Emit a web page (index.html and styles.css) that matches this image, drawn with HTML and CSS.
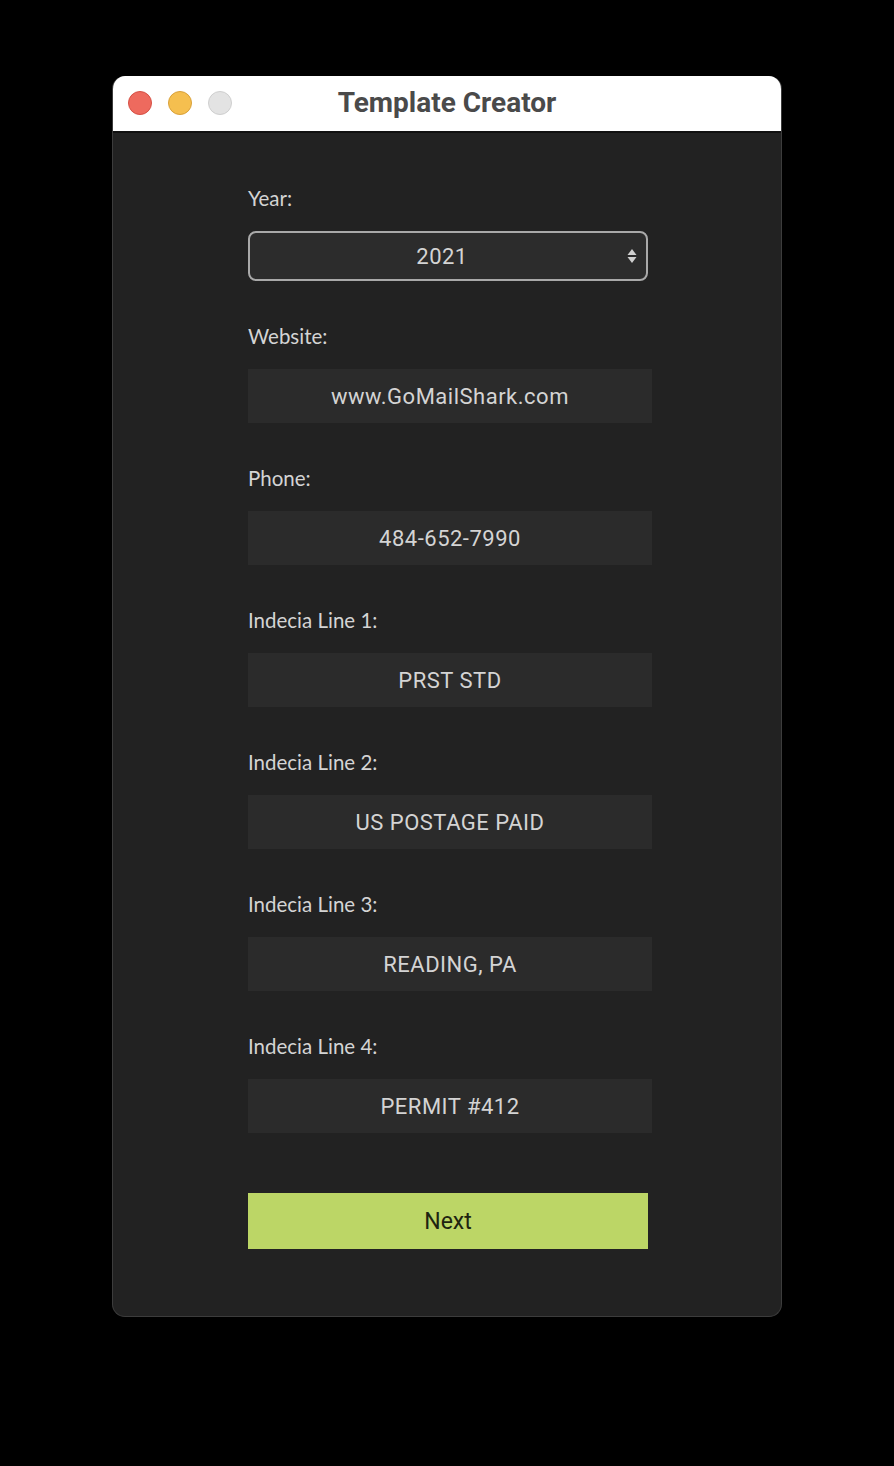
FILE: index.html
```html
<!DOCTYPE html>
<html>
<head>
<meta charset="utf-8">
<link rel="stylesheet" href="styles.css">
</head>
<body>
<div class="window">
  <div class="titlebar">
    <div class="lights">
      <span class="light red"></span>
      <span class="light yellow"></span>
      <span class="light gray"></span>
    </div>
    <div class="title">Template Creator</div>
  </div>
  <div class="content">
    <div class="field">
      <div class="label">Year:</div>
      <div class="select">
        <span class="select-value">2021</span>
        <svg class="arrows" width="10" height="20" viewBox="0 0 10 20">
          <path d="M5 3 L9.5 9 L0.5 9 Z" fill="#d0d0d0"/>
          <path d="M0.5 11 L9.5 11 L5 17 Z" fill="#d0d0d0"/>
        </svg>
      </div>
    </div>
    <div class="field">
      <div class="label">Website:</div>
      <div class="input">www.GoMailShark.com</div>
    </div>
    <div class="field">
      <div class="label">Phone:</div>
      <div class="input">484-652-7990</div>
    </div>
    <div class="field">
      <div class="label">Indecia Line 1:</div>
      <div class="input">PRST STD</div>
    </div>
    <div class="field">
      <div class="label">Indecia Line 2:</div>
      <div class="input">US POSTAGE PAID</div>
    </div>
    <div class="field">
      <div class="label">Indecia Line 3:</div>
      <div class="input">READING, PA</div>
    </div>
    <div class="field">
      <div class="label">Indecia Line 4:</div>
      <div class="input">PERMIT #412</div>
    </div>
    <div class="button">Next</div>
  </div>
</div>
</body>
</html>
```
FILE: styles.css
```css
html, body {
  margin: 0;
  padding: 0;
  background: #000;
}
body {
  width: 894px;
  height: 1466px;
  overflow: hidden;
}
.window {
  margin: 76px 0 0 112px;
  width: 670px;
  height: 1241px;
  box-sizing: border-box;
  background: #222222;
  border-radius: 13px;
  border: 1px solid #3c3c3c;
  border-top: none;
  overflow: hidden;
}
.titlebar {
  height: 55px;
  background: #ffffff;
  border-bottom: 2px solid #111;
  display: flex;
  align-items: center;
  justify-content: center;
  position: relative;
}
.lights {
  position: absolute;
  left: 15px;
  top: 15px;
  display: flex;
  gap: 16px;
}
.light {
  width: 24px;
  height: 24px;
  border-radius: 50%;
  box-sizing: border-box;
}
.red { background: #ee6a5e; border: 1px solid #d65045; }
.yellow { background: #f5bf4f; border: 1px solid #d9a13a; }
.gray { background: #e3e3e3; border: 1px solid #cfcfcf; }
.title {
  font-family: Roboto, "Liberation Sans", sans-serif;
  font-weight: 700;
  font-size: 28px;
  color: #4a4a4a;
  margin-top: -2px;
}
.content {
  padding: 53px 0 0 135px;
  display: flex;
  flex-direction: column;
}
.field {
  display: flex;
  flex-direction: column;
  margin-bottom: 43px;
}
.label {
  font-family: Lato, "Noto Sans", sans-serif;
  font-size: 20.5px;
  line-height: 24px;
  height: 24px;
  color: #d4d4d4;
  margin-bottom: 21px;
}
.select {
  width: 400px;
  height: 50px;
  box-sizing: border-box;
  border: 2px solid #a9a9a9;
  border-radius: 8px;
  background: #2c2c2c;
  display: flex;
  align-items: center;
  justify-content: center;
  position: relative;
}
.select-value {
  font-family: Roboto, "Liberation Sans", sans-serif;
  font-size: 22px;
  color: #d4d4d4;
  margin-left: -12px;
  letter-spacing: 0.5px;
}
.arrows {
  position: absolute;
  right: 9px;
  top: 13px;
}
.input {
  width: 404px;
  height: 54px;
  background: #2b2b2b;
  display: flex;
  align-items: center;
  justify-content: center;
  font-family: Roboto, "Liberation Sans", sans-serif;
  font-size: 22px;
  color: #d4d4d4;
  letter-spacing: 0.5px;
  padding-top: 1px;
  box-sizing: border-box;
}
.button {
  margin-top: 17px;
  width: 400px;
  height: 56px;
  background: #bcd666;
  display: flex;
  align-items: center;
  justify-content: center;
  font-family: Roboto, "Liberation Sans", sans-serif;
  font-size: 23px;
  color: #1e2410;
  padding-top: 1px;
  box-sizing: border-box;
}
```
